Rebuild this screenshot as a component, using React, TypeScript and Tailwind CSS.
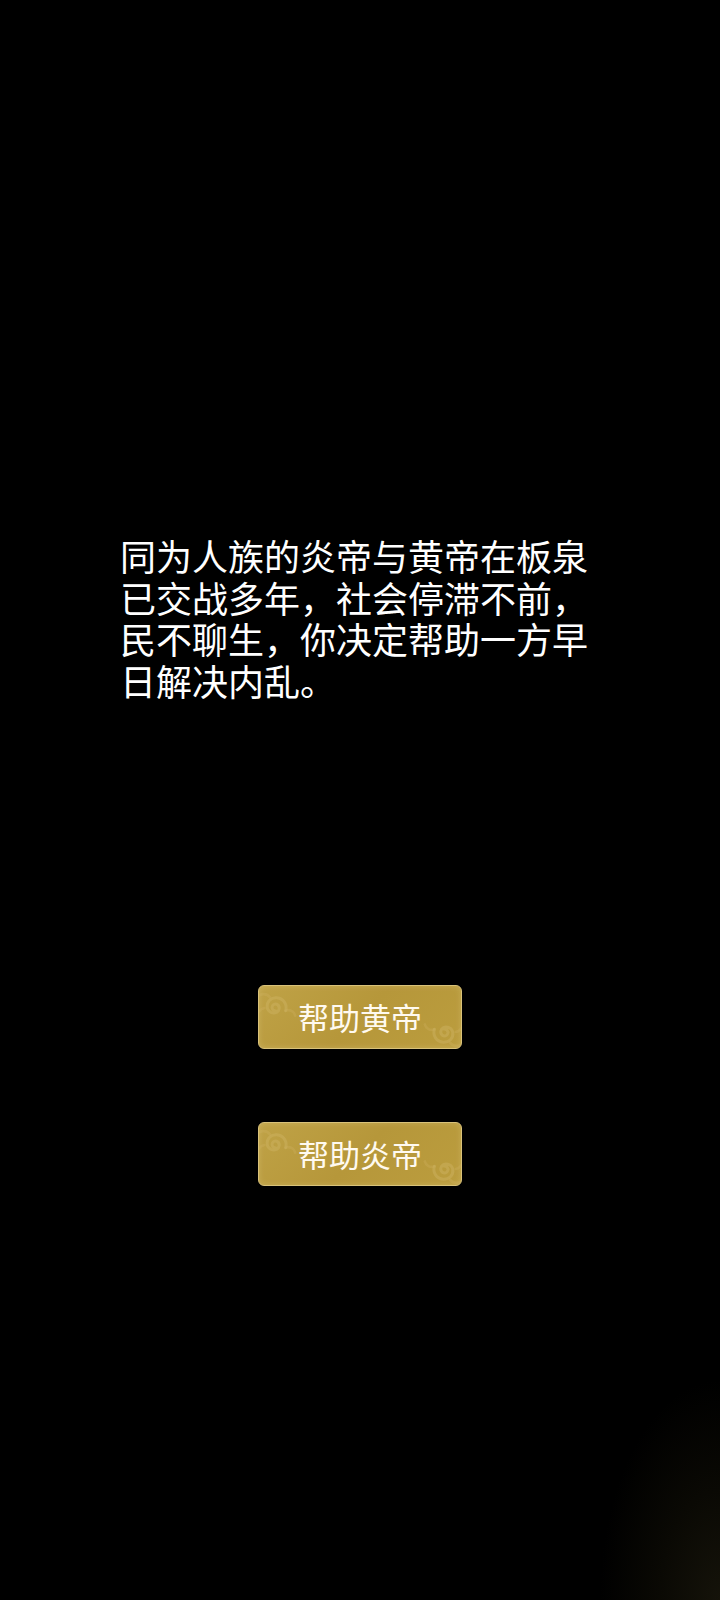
import type { ReactNode } from 'react'

const FONT = '"Noto Sans CJK SC", "Noto Sans", sans-serif'

// swirl cloud motif used in the button corners
function CloudSwirl({ className, flip }: { className?: string; flip?: boolean }) {
  return (
    <svg
      viewBox="0 0 48 48"
      className={className}
      style={flip ? { transform: 'scale(-1, -1)' } : undefined}
      fill="none"
    >
      <path
        d="M22 26c-3 0-4.6-2.4-3.8-4.6.8-2.4 3.6-3 5.4-1.6 2.6 2 2 6.2-1 7.6-4 1.8-8.8-.6-9.4-5-.8-5.6 4-10.2 9.8-9.6 6.4.6 10.6 6.8 8.6 13"
        stroke="#cfb463"
        strokeWidth="3"
        strokeLinecap="round"
        opacity="0.45"
      />
      <path
        d="M31.6 25.6c4.2-1.6 8.6.8 9.6 5M10.4 23C5.8 23.8 2.6 28 3.4 32.6M16 12.4C13 8.4 7 8 3.6 11.6"
        stroke="#cfb463"
        strokeWidth="2.6"
        strokeLinecap="round"
        opacity="0.3"
      />
    </svg>
  )
}

function GoldButton({ children }: { children: ReactNode }) {
  return (
    <button
      type="button"
      className="relative flex h-[64px] w-[204px] items-center justify-center overflow-hidden rounded-[6px] border-[1.5px] border-[#d9c27a] bg-[linear-gradient(135deg,#bfa246_0%,#b6973a_50%,#bb9d3e_100%)] shadow-[inset_0_0_6px_rgba(255,240,190,0.2)]"
    >
      <CloudSwirl className="absolute -left-[5px] -top-[1px] h-[48px] w-[48px]" />
      <CloudSwirl className="absolute -right-[5px] -bottom-[7px] h-[48px] w-[48px]" flip />
      <span
        className="relative text-[31px] leading-none text-[#fffaf0]"
        style={{ fontFamily: FONT }}
      >
        {children}
      </span>
    </button>
  )
}

export default function App() {
  return (
    <div className="relative flex h-[1600px] w-full flex-col overflow-hidden bg-black bg-[radial-gradient(ellipse_120px_220px_at_100%_100%,#15130a_0%,#0a0904_50%,#000_100%)]">
      <p
        className="ml-[120px] mt-[535px] w-[470px] text-[36px] leading-[41.7px] text-white"
        style={{ fontFamily: FONT }}
      >
        同为人族的炎帝与黄帝在板泉已交战多年，社会停滞不前，民不聊生，你决定帮助一方早日解决内乱。
      </p>

      <div className="mt-[283px] flex flex-col items-center gap-[73px]">
        <GoldButton>帮助黄帝</GoldButton>
        <GoldButton>帮助炎帝</GoldButton>
      </div>
    </div>
  )
}
